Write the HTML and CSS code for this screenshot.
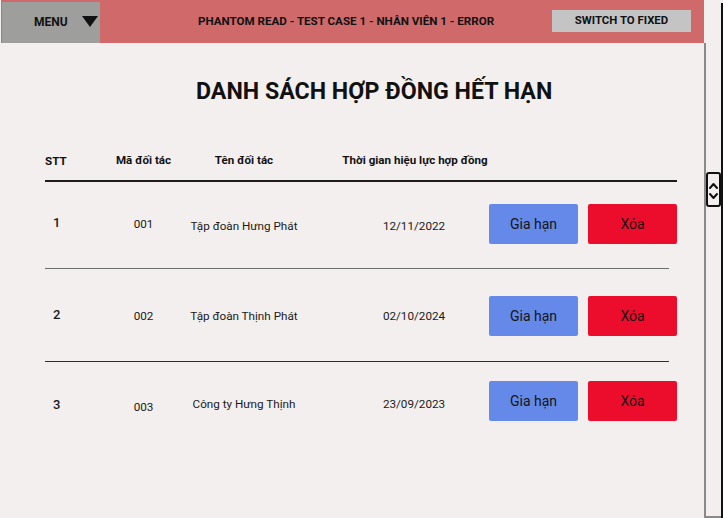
FILE: index.html
```html
<!DOCTYPE html>
<html lang="vi">
<head>
<meta charset="utf-8">
<title>Danh sách hợp đồng hết hạn</title>
<link rel="stylesheet" href="styles.css">
</head>
<body>
<div class="main">
  <header class="topbar">
    <div class="menu">
      <span class="menu-label">MENU</span>
      <span class="menu-caret"></span>
    </div>
    <div class="topbar-title">PHANTOM READ - TEST CASE 1 - NHÂN VIÊN 1 - ERROR</div>
    <button class="switch-btn">SWITCH TO FIXED</button>
  </header>

  <h1 class="page-title">DANH SÁCH HỢP ĐỒNG HẾT HẠN</h1>

  <section class="table">
    <div class="grid thead">
      <div class="c-stt">STT</div>
      <div class="c-ma">Mã đối tác</div>
      <div class="c-ten">Tên đối tác</div>
      <div class="c-time">Thời gian hiệu lực hợp đồng</div>
    </div>

    <div class="grid trow row-1">
      <div class="c-stt num">1</div>
      <div class="c-ma">001</div>
      <div class="c-ten">Tập đoàn Hưng Phát</div>
      <div class="c-time">12/11/2022</div>
      <button class="c-gia btn btn-blue">Gia hạn</button>
      <button class="c-xoa btn btn-red">Xóa</button>
    </div>
    <div class="sep sep-light"></div>

    <div class="grid trow row-2">
      <div class="c-stt num">2</div>
      <div class="c-ma">002</div>
      <div class="c-ten">Tập đoàn Thịnh Phát</div>
      <div class="c-time">02/10/2024</div>
      <button class="c-gia btn btn-blue">Gia hạn</button>
      <button class="c-xoa btn btn-red">Xóa</button>
    </div>
    <div class="sep sep-dark"></div>

    <div class="grid trow row-3">
      <div class="c-stt num">3</div>
      <div class="c-ma low">003</div>
      <div class="c-ten">Công ty Hưng Thịnh</div>
      <div class="c-time">23/09/2023</div>
      <button class="c-gia btn btn-blue">Gia hạn</button>
      <button class="c-xoa btn btn-red">Xóa</button>
    </div>
  </section>
</div>

<aside class="scroll">
  <div class="track">
    <div class="thumb">
      <svg width="11" height="31" viewBox="0 0 11 31" aria-hidden="true">
        <polyline points="2,14 5.5,10 9,14" fill="none" stroke="#111" stroke-width="2" stroke-linecap="round" stroke-linejoin="round"/>
        <polyline points="2,20 5.5,24 9,20" fill="none" stroke="#111" stroke-width="2" stroke-linecap="round" stroke-linejoin="round"/>
      </svg>
    </div>
  </div>
</aside>
</body>
</html>
```

FILE: styles.css
```css
* { box-sizing: border-box; }

html, body {
  margin: 0;
  padding: 0;
}

body {
  width: 723px;
  height: 518px;
  overflow: hidden;
  background: #f4efef;
  font-family: Roboto, "Noto Sans", sans-serif;
  color: #111;
  display: flex;
}

.main {
  width: 704px;
  padding-left: 1px;
}

/* ---------- top bar ---------- */
.topbar {
  height: 43px;
  background: #d06a6a;
  padding-top: 2px;
  padding-left: 1px;
  display: flex;
  align-items: flex-start;
}

.menu {
  width: 98px;
  height: 41px;
  background: #9e9e9c;
  display: flex;
  align-items: center;
  padding-left: 32px;
  padding-bottom: 2px;
}

.menu-label {
  font-size: 12px;
  font-weight: 700;
  color: #111;
}

.menu-caret {
  margin-left: 14px;
  width: 0;
  height: 0;
  border-left: 8px solid transparent;
  border-right: 8px solid transparent;
  border-top: 11px solid #111;
}

.topbar-title {
  margin-left: 98px;
  height: 39px;
  line-height: 39px;
  font-size: 11.6px;
  font-weight: 700;
  color: #111;
}

.switch-btn {
  margin-left: auto;
  margin-right: 13px;
  margin-top: 8px;
  width: 139px;
  height: 22px;
  border: 0;
  border-radius: 0;
  background: #c4c4c4;
  font-family: inherit;
  font-size: 11.4px;
  font-weight: 700;
  color: #111;
  line-height: 20px;
  padding: 0 0 2px;
}

/* ---------- heading ---------- */
.page-title {
  margin: 35px 0 0;
  padding-left: 195px;
  font-size: 23.2px;
  line-height: 26px;
  font-weight: 700;
  color: #111;
}

/* ---------- table ---------- */
.table {
  margin-left: 44px;
  width: 632px;
}

.grid {
  display: grid;
  grid-template-columns: 23px 38px 75px 3px 120px 35px 150px 89px 10px 89px;
  align-items: center;
}

.c-stt  { grid-column: 1; text-align: center; }
.c-ma   { grid-column: 3; text-align: center; white-space: nowrap; }
.c-ten  { grid-column: 5; text-align: center; white-space: nowrap; }
.c-time { grid-column: 7; text-align: center; white-space: nowrap; }
.c-gia  { grid-column: 8; }
.c-xoa  { grid-column: 10; }

.thead {
  margin-top: 46px;
  height: 32px;
  grid-template-rows: 20px;
  padding-bottom: 10px;
  border-bottom: 2px solid #1c1c1c;
  font-size: 11.6px;
  font-weight: 700;
  line-height: 20px;
}

.thead .c-stt { text-align: left; padding-top: 2px; }
.thead .c-time { padding-left: 2px; }

.trow {
  font-size: 11.7px;
  color: #1a1a1a;
}

.trow .num {
  font-size: 13px;
  font-weight: 500;
  text-align: left;
  padding-left: 8px;
  padding-bottom: 3px;
}

.trow .c-ten, .trow .c-time { padding-top: 3px; }

.row-1 { padding: 22px 0 24px; }
.row-2 { padding: 27px 0 25px; }
.row-3 { padding: 19px 0 0; }

.row-2 .c-ten, .row-2 .c-time, .row-2 .c-ma { padding-top: 0; }
.row-2 .num { padding-bottom: 4px; }
.row-3 .c-ten, .row-3 .c-time { padding-top: 6px; }
.row-3 .num { padding-top: 6px; padding-bottom: 0; }
.row-3 .low { padding-top: 12px; }

.btn {
  height: 40px;
  border: 0;
  border-radius: 2px;
  font-family: inherit;
  font-size: 14px;
  color: #151515;
  padding: 0;
}

.btn-blue { background: #6589e8; }
.btn-red  { background: #ec0c2b; }

.sep {
  width: 624px;
  height: 1px;
}

.sep-light { background: #6e6e6e; }
.sep-dark  { background: #2e2e2e; }

/* ---------- scrollbar ---------- */
.scroll {
  width: 19px;
  height: 515px;
  margin-top: 3px;
  border-right: 2px solid #111;
}

.track {
  margin-top: 40px;
  height: 475px;
  border-left: 2px solid #8a8a8a;
  border-bottom: 2px solid #8a8a8a;
  padding-top: 129px;
}

.thumb {
  width: 15px;
  height: 35px;
  border: 2px solid #111;
  border-radius: 3px;
  display: flex;
  align-items: center;
  justify-content: center;
}

.thumb svg { display: block; }
```
